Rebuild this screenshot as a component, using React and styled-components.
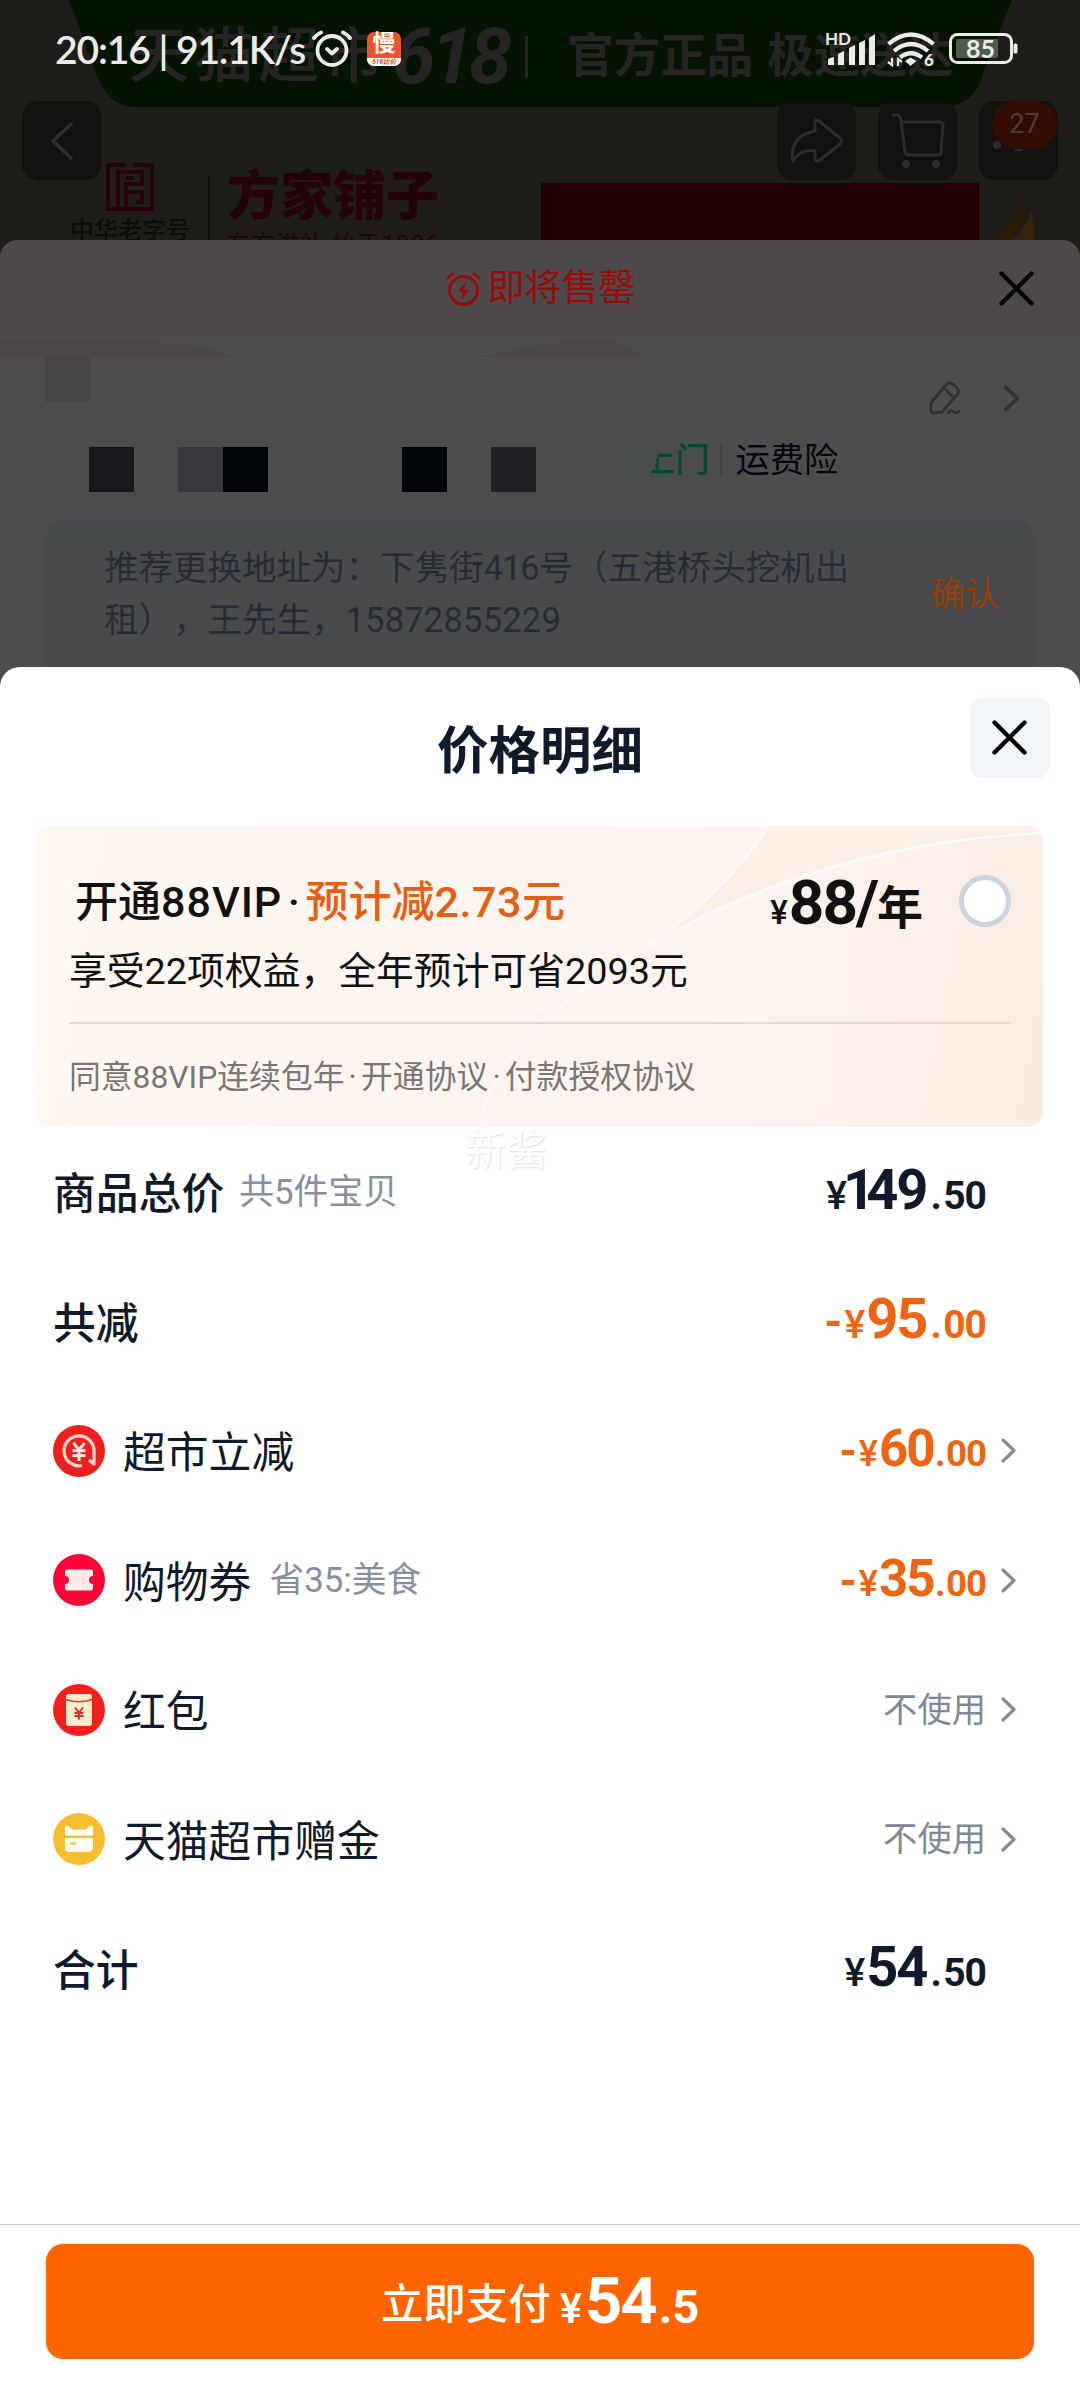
import React from "react";
import styled, { createGlobalStyle } from "styled-components";

const Global = createGlobalStyle`
  * { box-sizing: border-box; }
  body { margin: 0; background: #1e1d1a; }
  svg { display: block; flex: none; }
`;

const Screen = styled.main`
  position: relative;
  width: 1080px;
  height: 2400px;
  overflow: hidden;
  display: flex;
  flex-direction: column;
  background: #1e1d1a;
  font-family: Roboto, "Noto Sans CJK SC", sans-serif;
  white-space: nowrap;
  text-spacing-trim: space-all;
`;

/* ---------- status bar ---------- */

const StatusBar = styled.header`
  position: absolute;
  inset: 0 0 auto 0;
  z-index: 5;
  height: 98px;
  padding: 0 62px 0 55px;
  display: flex;
  align-items: center;
  justify-content: space-between;
  color: #ecebea;
`;

const StatusGroup = styled.div`
  display: flex;
  align-items: center;
  gap: ${(p) => p.$gap}px;
`;

const Clock = styled.span`
  font-family: Lato, sans-serif;
  font-size: 39px;
  font-weight: 600;
  letter-spacing: -1.1px;
  line-height: 44px;
`;

const SlowApp = styled.div`
  width: 34px;
  height: 34px;
  margin-left: 8px;
  border-radius: 7px;
  display: flex;
  flex-direction: column;
  background: #ee5330;
`;

const SlowGlyph = styled.span`
  height: 26px;
  font-size: 23px;
  font-weight: 700;
  line-height: 24px;
  text-align: center;
  color: #fff;
`;

const SlowTag = styled.span`
  height: 8px;
  border-radius: 0 0 7px 7px;
  background: #fff;
  color: #e0452a;
  font-size: 6.5px;
  font-style: italic;
  font-weight: 700;
  line-height: 8px;
  text-align: center;
`;

/* ---------- product page behind the sheets ---------- */

const Hero = styled.section`
  position: relative;
  flex: none;
  height: 258px;
  margin-bottom: -18px;
  overflow: hidden;
  display: flex;
  flex-direction: column;
`;

const Promo = styled.div`
  position: relative;
  flex: none;
  height: 107px;
  display: flex;
  align-items: center;
  padding: 6px 0 0 129px;
  color: #262524;
`;

const PromoShape = styled.svg`
  position: absolute;
  inset: 0;
`;

const PromoText = styled.span`
  position: relative;
  font-size: ${(p) => p.$size}px;
  font-weight: ${(p) => p.$weight || 700};
  line-height: 1;
  letter-spacing: ${(p) => p.$spacing || 0}px;
  font-style: ${(p) => (p.$italic ? "italic" : "normal")};
  margin-left: ${(p) => p.$left || 0}px;
`;

const PromoRule = styled.i`
  position: relative;
  width: 3px;
  height: 42px;
  margin: 0 39px 0 18px;
  background: #262524;
`;

const Brand = styled.div`
  display: flex;
  flex: none;
  padding: 56px 0 0 69px;
`;

const Seal = styled.div`
  width: 122px;
  display: flex;
  flex-direction: column;
  align-items: center;
  gap: 6px;
  color: #0c0b0a;
  font-size: 24px;
  font-weight: 500;
  line-height: 28px;
`;

const BrandRule = styled.i`
  width: 2px;
  height: 90px;
  margin: 12px 17px 0;
  background: #11100e;
`;

const BrandName = styled.div`
  display: flex;
  flex-direction: column;
  width: 314px;
  color: #240306;
  font-size: 53px;
  font-weight: 900;
  line-height: 68px;
`;

const BrandSub = styled.span`
  font-size: 23px;
  font-weight: 400;
  letter-spacing: 1.6px;
  line-height: 24px;
  padding-top: 2px;
`;

const RedPanel = styled.div`
  width: 438px;
  height: 80px;
  margin-top: 20px;
  background: #200002;
`;

const NavLayer = styled.nav`
  position: absolute;
  inset: 101px 22px auto 22px;
  display: flex;
  gap: 22px;
`;

const NavButton = styled.div`
  position: relative;
  width: 79px;
  height: 79px;
  border-radius: 15px;
  background: #11110f;
  display: flex;
  align-items: center;
  justify-content: center;
  margin-right: ${(p) => (p.$push ? "auto" : 0)};
`;

const Badge = styled.span`
  position: absolute;
  top: 0;
  right: 1px;
  width: 65px;
  height: 47px;
  border-radius: 24px;
  background: #340d00;
  color: #4c3d38;
  font-size: 27px;
  line-height: 47px;
  text-align: center;
`;

/* ---------- order sheet ---------- */

const OrderSheet = styled.section`
  position: relative;
  flex: none;
  height: 445px;
  margin-bottom: -18px;
  border-radius: 18px 18px 0 0;
  overflow: hidden;
  background: #4d4d4d;
`;

const SoldOut = styled.div`
  height: 117px;
  display: grid;
  grid-template-columns: 1fr auto 1fr;
  align-items: start;
  padding: 29px 46px 0 47px;
  background: linear-gradient(#4d4a49 0, #4d4a49 90px, #4d4d4d 108px);
  color: #980909;
`;

const SoldOutText = styled.div`
  grid-column: 2;
  display: flex;
  align-items: center;
  gap: 7px;
  font-size: 37px;
  line-height: 40px;
`;

const CloseGlyph = styled.div`
  justify-self: end;
  padding-top: 2px;
`;

const Swash = styled.svg`
  margin-top: -17px;
`;

const Mosaic = styled.div`
  display: flex;
  height: ${(p) => p.$height}px;
  padding-left: ${(p) => p.$left}px;
`;

const Cell = styled.i`
  width: 44.7px;
  height: 44.7px;
  background: ${(p) => p.$tone || "transparent"};
`;

const AddressTools = styled.div`
  flex: 1;
  display: flex;
  justify-content: flex-end;
  align-items: center;
  gap: 42px;
  height: 82px;
  padding-right: 60px;
`;

const Service = styled.div`
  display: flex;
  align-items: center;
  margin: -12px 0 0 87px;
  height: 50px;
  padding-left: 18px;
  font-size: 34.3px;
  line-height: 50px;
  color: #05080f;
  background: linear-gradient(100deg, #4a4d4d 0, #4b4d4d 36px, transparent 70px);
`;

const DoorPickup = styled.span`
  color: #034a34;
  font-weight: 500;
  clip-path: polygon(5px 100%, 18px 18px, 24px 0, 100% 0, 100% 100%);
`;

const ServiceRule = styled.i`
  width: 2px;
  height: 31px;
  margin: 0 13px 0 11px;
  background: #434344;
`;

const AddressTip = styled.div`
  margin: 0 46px;
  height: 160px;
  border-radius: 18px;
  display: flex;
  justify-content: space-between;
  align-items: flex-start;
  padding: 22px 35px 0 58px;
  background: linear-gradient(#474a4c, #494a4b 40px);
  color: #282b34;
  font-size: 34.5px;
  line-height: 52px;
`;

const Confirm = styled.span`
  padding-top: 26px;
  font-size: 34px;
  color: #963f0a;
`;

/* ---------- price sheet ---------- */

const PriceSheet = styled.section`
  position: relative;
  flex: 1;
  display: flex;
  flex-direction: column;
  border-radius: 20px 20px 0 0;
  background: #fff;
  color: #101a2b;
`;

const SheetHead = styled.div`
  height: 159px;
  display: grid;
  grid-template-columns: 1fr auto 1fr;
  align-items: start;
  padding: 31px 30px 0;
`;

const SheetTitle = styled.h1`
  grid-column: 2;
  margin: 24px 0 0;
  font-size: 51.5px;
  font-weight: 700;
  line-height: 60px;
`;

const CloseButton = styled.button`
  justify-self: end;
  width: 80px;
  height: 80px;
  border: 0;
  border-radius: 12px;
  padding: 0 1px 1px 0;
  display: grid;
  place-items: center;
  background: #f1f5f9;
`;

const VipCard = styled.div`
  position: relative;
  height: 301px;
  margin: 0 37px 0 35px;
  border-radius: 15px;
  overflow: hidden;
  background: linear-gradient(100deg, #fef8f1 0%, #fef5f0 30%, #fdf4f0 65%, #f9ece4 100%);
  color: #12110f;
`;

const VipArt = styled.svg`
  position: absolute;
  inset: 0;
`;

const VipBody = styled.div`
  position: relative;
  padding: 44px 32px 0 34px;
`;

const VipTop = styled.div`
  display: flex;
  align-items: center;
  height: 62px;
  padding-left: 6px;
`;

const VipName = styled.div`
  flex: 1;
  padding-top: 2px;
  font-size: 43px;
  font-weight: 500;
  line-height: 62px;
  em { font-style: normal; color: #e85d14; }
`;

const Latin = styled.span`
  letter-spacing: ${(p) => p.$spacing}px;
`;

const Dot = styled.span`
  margin: 0 0.13em;
  &::before { content: "·"; }
`;

const VipPrice = styled.div`
  display: flex;
  align-items: baseline;
  height: 62px;
  padding-top: 2px;
  line-height: 62px;
  font-weight: 700;
  margin-right: 36px;
`;

const Glyph = styled.span`
  font-size: ${(p) => p.$size}px;
  font-weight: ${(p) => p.$weight || 700};
  letter-spacing: ${(p) => p.$spacing || 0}px;
  margin-left: ${(p) => p.$left || 0}px;
`;

const Radio = styled.i`
  width: 52px;
  height: 52px;
  border: 5px solid #cdd3db;
  border-radius: 50%;
  background: #fff;
`;

const VipBenefit = styled.div`
  height: 92px;
  padding-top: 9px;
  border-bottom: 2px solid #e3dbd6;
  font-size: 37.8px;
  line-height: 60px;
`;

const VipTerms = styled.div`
  padding-top: 30px;
  font-size: 31.8px;
  line-height: 46px;
  color: #7a7673;
`;

const Watermark = styled.span`
  position: absolute;
  left: 465px;
  top: 459px;
  font-size: 41px;
  line-height: 50px;
  color: #fff;
  text-shadow: 1px 1px 2px #dcdce2;
`;

const Row = styled.div`
  height: 129.5px;
  display: flex;
  align-items: center;
  padding: 0 64px 0 53px;
`;

const RowIcon = styled.svg`
  width: 52px;
  height: 52px;
  margin-right: 18px;
`;

const Label = styled.span`
  padding-top: 5px;
  font-size: 42.8px;
  line-height: 50px;
  font-weight: ${(p) => (p.$strong ? 500 : 400)};
`;

const Note = styled.span`
  margin-left: ${(p) => p.$left || 15}px;
  font-size: 34.8px;
  line-height: 50px;
  color: #868f9d;
`;

const RowEnd = styled.div`
  margin-left: auto;
  display: flex;
  align-items: center;
  color: ${(p) => p.$color || "inherit"};
`;

const Unused = styled.span`
  font-size: 34.3px;
  line-height: 50px;
`;

const Amount = styled.span`
  display: flex;
  align-items: baseline;
  padding-top: 2px;
  line-height: 60px;
`;

const Arrow = styled.span`
  width: 30px;
  display: flex;
  justify-content: flex-end;
`;

const Footer = styled.footer`
  margin-top: auto;
  height: 176px;
  padding: 19px 46px 0;
  border-top: 1px solid #cbcbcb;
`;

const PayButton = styled.button`
  width: 100%;
  height: 115px;
  border: 0;
  border-radius: 17px;
  display: flex;
  align-items: baseline;
  justify-content: center;
  padding: 0;
  background: #ff6400;
  color: #fff;
  font-family: inherit;
  line-height: 114px;
`;

const PayLabel = styled.span`
  align-self: center;
  padding-top: 6px;
  font-size: 42.5px;
  font-weight: 500;
  line-height: 50px;
`;

const GREY = "#858a94";
const ORANGE = "#ee6410";

const Cross = ({ size = 35 }) => (
  <svg width={size} height={size} viewBox="0 0 35 35" fill="none" stroke="#060606" strokeWidth="4.4" strokeLinecap="round">
    <path d="M2.5 2.5 32.5 32.5M32.5 2.5 2.5 32.5" />
  </svg>
);

const Chevron = ({ color = GREY, w = 15, h = 25 }) => (
  <svg width={w} height={h} viewBox="0 0 15 25" fill="none" stroke={color} strokeWidth="3.2" strokeLinecap="round" strokeLinejoin="round">
    <path d="M2 2 13 12.5 2 23" />
  </svg>
);

function StatusIcons() {
  return (
    <svg width="194" height="42" viewBox="824 29 194 42" fill="none">
      <text x="825" y="46" fontFamily="Lato, sans-serif" fontWeight="700" fontSize="17" fill="#ecebea">HD</text>
      <g fill="#ecebea">
        <path d="M828 66v-5q0-2 6-3v8z" />
        <path d="M838 66V55l6-3v14zM849 66V49l6-3v20zM859 66V44l6-3v25zM869 66V39l6-4v31z" />
        <path d="m905 62 5.500-3.500 6 3.500-6 5z" />
      </g>
      <g stroke="#ecebea" strokeWidth="4.200">
        <path d="M888.500 45Q911 26 933.500 45" />
        <path d="M894 52Q911 38 928 52" />
        <path d="M900 58.500Q911 50 922 58.500" />
      </g>
      <path d="M892 59v7l-4-3M898 67v-7l4 3" stroke="#ecebea" strokeWidth="2.300" />
      <text x="924" y="67" fontFamily="Lato, sans-serif" fontWeight="900" fontSize="17" fill="#ecebea">6</text>
      <rect x="950.500" y="35.500" width="61" height="28" rx="7" stroke="#ecebea" strokeWidth="3" />
      <rect x="956" y="40" width="42" height="19" rx="2" fill="#4c5e49" />
      <rect x="1013.500" y="44.500" width="4" height="10" rx="1.500" fill="#ecebea" />
      <text x="980.500" y="59" textAnchor="middle" fontFamily="Lato, sans-serif" fontWeight="700" fontSize="25" fill="#ecebea">85</text>
    </svg>
  );
}

function Status() {
  return (
    <StatusBar>
      <StatusGroup $gap={7}>
        <Clock>20:16 | 91.1K/s</Clock>
        <svg width="40" height="38" viewBox="0 0 40 38" fill="none" stroke="#ecebea" strokeWidth="3.800" strokeLinecap="round" strokeLinejoin="round">
          <circle cx="20" cy="20.500" r="14.500" />
          <path d="M2 8Q5 4 9 2.500M38 8Q35 4 31 2.500M15 19l5 4.500 5-4.500" />
        </svg>
        <SlowApp>
          <SlowGlyph>慢</SlowGlyph>
          <SlowTag>618比价</SlowTag>
        </SlowApp>
      </StatusGroup>
      <StatusIcons />
    </StatusBar>
  );
}

function ProductHero() {
  return (
    <Hero>
      <Promo>
        <PromoShape width="1080" height="107" viewBox="0 0 1080 107">
          <path d="M69 0H1012L984 70Q976 107 940 107H135Q110 107 98 78Z" fill="#041400" />
        </PromoShape>
        <PromoText $size={60} $spacing={5} $weight={500}>天猫超市</PromoText>
        <PromoText $size={78} $italic $spacing={-5} $left={3}>618</PromoText>
        <PromoRule />
        <PromoText $size={46.5}>官方正品</PromoText>
        <PromoText $size={46.5} $left={14}>极速送达</PromoText>
      </Promo>
      <Brand>
        <Seal>
          <svg width="48" height="48" viewBox="0 0 48 48" fill="none" stroke="#240306" strokeWidth="4">
            <path d="M20 2H2V46H46V2H28M12 46V9H36V21H20V29H36V39H30M20 15H28M20 29V46" />
          </svg>
          中华老字号
        </Seal>
        <BrandRule />
        <BrandName>
          方家铺子
          <BrandSub>东方滋补 始于1906</BrandSub>
        </BrandName>
        <RedPanel />
        <svg width="60" height="80" viewBox="979 163 60 80">
          <path d="M989 240Q1020 225 1023 190Q1029 215 1010 240Z" fill="#2d1d05" />
          <path d="M1011 240Q1028 228 1031 210Q1036 225 1034 240Z" fill="#35230a" />
        </svg>
      </Brand>
      <NavLayer>
        <NavButton $push>
          <svg width="24" height="40" viewBox="0 0 24 40" fill="none" stroke="#302f2e" strokeWidth="3.500" strokeLinecap="round" strokeLinejoin="round">
            <path d="M21 3 3 20 21 37" />
          </svg>
        </NavButton>
        <NavButton>
          <svg width="54" height="46" viewBox="0 0 54 46" fill="none" stroke="#2e2d2c" strokeWidth="3" strokeLinejoin="round">
            <path d="M25 3Q26 1 29 3L50 20Q53 23 50 26L30 42Q25 45 25 40V33Q11 30 3 43Q-1 18 25 13Z" />
          </svg>
        </NavButton>
        <NavButton>
          <svg width="54" height="56" viewBox="0 0 54 56" fill="none" stroke="#2e2d2c" strokeWidth="3" strokeLinejoin="round" strokeLinecap="round">
            <path d="M2 2H6Q9 2 10 7L14 39Q15 42 18 42H47Q50 42 50 39L52 12Q52 9 49 9H10" />
            <circle cx="15" cy="51" r="4" fill="#2e2d2c" stroke="none" />
            <circle cx="45" cy="51" r="4" fill="#2e2d2c" stroke="none" />
          </svg>
        </NavButton>
        <NavButton>
          <svg width="54" height="20" viewBox="0 0 54 20" fill="#2e2d2c">
            <circle cx="5" cy="14" r="4" />
            <path d="M23 18h8v2h-8z" />
          </svg>
          <Badge>27</Badge>
        </NavButton>
      </NavLayer>
    </Hero>
  );
}

function Order() {
  return (
    <OrderSheet>
      <SoldOut>
        <SoldOutText>
          <svg width="35" height="36" viewBox="0 0 35 36" fill="none" stroke="#980909" strokeWidth="3" strokeLinecap="round">
            <circle cx="17.500" cy="19.500" r="14" />
            <path d="M2 7Q4 4 7 3M33 7Q31 4 28 3" />
            <path d="M19.500 11 12 20.500h5l-1.500 8.500 8-10.500h-5.500z" fill="#980909" stroke="none" />
          </svg>
          即将售罄
        </SoldOutText>
        <CloseGlyph><Cross /></CloseGlyph>
      </SoldOut>
      <Swash width="1080" height="17" viewBox="0 0 1080 17">
        <path d="M0 0H140Q190 3 238 17H0Z" fill="#4d4747" />
        <path d="M480 17Q560 -2 605 0Q628 4 645 17Z" fill="#4d4848" />
      </Swash>
      <Mosaic $height={90} $left={45}>
        <Cell $tone="#464649" />
        <AddressTools>
          <svg width="32" height="34" viewBox="0 0 32 34" fill="none" stroke="#2e3036" strokeWidth="2.800" strokeLinecap="round" strokeLinejoin="round">
            <path d="M2 22 17 4Q21 0 25 4L28 7Q31 11 28 14L13 31 3 32Q1 30 2 22ZM16 8 25 17M19 32Q22 28 25 31Q28 33 30 30" />
          </svg>
          <Chevron color="#2e3036" w={17} h={27} />
        </AddressTools>
      </Mosaic>
      <Mosaic $height={73} $left={89}>
        <Cell $tone="#16181c" />
        <Cell $tone="#4c4c4c" />
        <Cell $tone="#37373d" />
        <Cell $tone="#02060b" />
        <Cell />
        <Cell $tone="#4e4e4e" />
        <Cell />
        <Cell $tone="#02060b" />
        <Cell />
        <Cell $tone="#202226" />
        <Service>
          <DoorPickup>上门</DoorPickup>
          <ServiceRule />
          运费险
        </Service>
      </Mosaic>
      <AddressTip>
        <span>
          推荐更换地址为：下隽街<Latin $spacing={-1}>416</Latin>号（五港桥头挖机出
          <br />
          租），王先生，<Latin $spacing={0.2}>15872855229</Latin>
        </span>
        <Confirm>确认</Confirm>
      </AddressTip>
    </OrderSheet>
  );
}

/* A leading 1 is set tighter than the other figures. */
const Money = ({ minus, whole, cents, small }) => {
  const size = small ? 51 : 56;
  const one = whole[0] === "1";
  return (
    <Amount>
      {minus && <Glyph $size={small ? 44 : 46} $weight={700}>-</Glyph>}
      <Glyph $size={small ? 36 : 39} $weight={500} $left={minus ? 2 : 0}>¥</Glyph>
      {one && <Glyph $size={size} $spacing={-9} $left={-4}>1</Glyph>}
      <Glyph $size={size} $spacing={-2} $left={one ? 0 : 1}>{one ? whole.slice(1) : whole}</Glyph>
      <Glyph $size={small ? 36.5 : 39} $left={small ? 1.5 : 4} $spacing={small ? -0.5 : 0.5}>.</Glyph>
      <Glyph $size={small ? 36.5 : 39} $spacing={-1} $left={1}>{cents}</Glyph>
    </Amount>
  );
};

const icons = {
  instant: (
    <RowIcon viewBox="0 0 52 52">
      <circle cx="26" cy="26" r="26" fill="#f01e1c" />
      <path d="M29 40.500A15 15 0 1 1 41 27V39L36 35" fill="none" stroke="#ffd9cf" strokeWidth="3.200" strokeLinejoin="round" />
      <path d="M20.500 18 26 25 31.500 18M19.500 25.500H32.500M19.500 30.500H32.500M26 25V36" fill="none" stroke="#ffe6df" strokeWidth="3" />
    </RowIcon>
  ),
  coupon: (
    <RowIcon viewBox="0 0 52 52">
      <circle cx="26" cy="26" r="26" fill="#fb0637" />
      <path d="M14 15.500H38Q40 15.500 40 18V22A4 4 0 0 0 40 30V34Q40 36.500 38 36.500H14Q12 36.500 12 34V30A4 4 0 0 0 12 22V18Q12 15.500 14 15.500Z" fill="#fdebe9" />
      <path d="M30.500 19V34" stroke="#f7c3c3" strokeWidth="1.500" strokeDasharray="2 2.500" />
    </RowIcon>
  ),
  packet: (
    <RowIcon viewBox="0 0 52 52">
      <circle cx="26" cy="26" r="26" fill="#f4201c" />
      <rect x="13" y="10" width="26" height="32" rx="3" fill="#fdeccb" />
      <path d="M13 15.500Q26 20 39 15.500" fill="none" stroke="#c24a30" strokeWidth="1.400" />
      <path d="M22 23.500 26 28.500 30 23.500M21.500 29H30.500M21.500 32H30.500M26 28.500V35.500" fill="none" stroke="#d22d1e" strokeWidth="1.900" />
    </RowIcon>
  ),
  gift: (
    <RowIcon viewBox="0 0 52 52">
      <circle cx="26" cy="26" r="26" fill="#f7be32" />
      <path d="M12 15Q12 11.500 15 13L19 16.500H33L37 13Q40 11.500 40 15V22.500H12ZM12 25H40V34Q40 39 35 39H17Q12 39 12 34Z" fill="#fffdf5" />
      <path d="M17 30.500H23" stroke="#f7be32" strokeWidth="2.200" />
    </RowIcon>
  ),
};

function Prices() {
  return (
    <PriceSheet>
      <SheetHead>
        <SheetTitle>价格明细</SheetTitle>
        <CloseButton aria-label="关闭"><Cross /></CloseButton>
      </SheetHead>
      <VipCard>
        <VipArt width="1008" height="301" viewBox="35 826 1008 301" fill="none">
          <path d="M768 826H1043V833C900 838 800 870 700 915L650 945Q720 895 768 826Z" fill="#fbefe5" />
          <path d="M768 826C725 895 640 965 520 1018" stroke="#fffaf7" strokeWidth="2" />
          <path d="M1043 833C860 842 690 900 545 1018Q490 1070 480 1127" stroke="#fff9f6" strokeWidth="2.500" />
        </VipArt>
        <VipBody>
          <VipTop>
            <VipName>
              开通<Latin $spacing={1}>88VIP</Latin><Dot />
              <em>预计减<Latin $spacing={0.5}>2.73</Latin>元</em>
            </VipName>
            <VipPrice>
              <Glyph $size={33} $weight={500}>¥</Glyph>
              <Glyph $size={62} $spacing={-2} $left={1}>88/</Glyph>
              <Glyph $size={46}>年</Glyph>
            </VipPrice>
            <Radio />
          </VipTop>
          <VipBenefit>享受22项权益，全年预计可省2093元</VipBenefit>
          <VipTerms>同意88VIP连续包年<Dot />开通协议<Dot />付款授权协议</VipTerms>
        </VipBody>
      </VipCard>
      <Watermark>新酱</Watermark>
      <Row>
        <Label $strong>商品总价</Label>
        <Note>共5件宝贝</Note>
        <RowEnd>
          <Money whole="149" cents="50" />
          <Arrow />
        </RowEnd>
      </Row>
      <Row>
        <Label $strong>共减</Label>
        <RowEnd $color={ORANGE}>
          <Money minus whole="95" cents="00" />
          <Arrow />
        </RowEnd>
      </Row>
      <Row>
        {icons.instant}
        <Label>超市立减</Label>
        <RowEnd $color={ORANGE}>
          <Money minus small whole="60" cents="00" />
          <Arrow><Chevron /></Arrow>
        </RowEnd>
      </Row>
      <Row>
        {icons.coupon}
        <Label>购物券</Label>
        <Note $left={18}>省35:美食</Note>
        <RowEnd $color={ORANGE}>
          <Money minus small whole="35" cents="00" />
          <Arrow><Chevron /></Arrow>
        </RowEnd>
      </Row>
      <Row>
        {icons.packet}
        <Label>红包</Label>
        <RowEnd $color="#7f8896">
          <Unused>不使用</Unused>
          <Arrow><Chevron /></Arrow>
        </RowEnd>
      </Row>
      <Row>
        {icons.gift}
        <Label>天猫超市赠金</Label>
        <RowEnd $color="#7f8896">
          <Unused>不使用</Unused>
          <Arrow><Chevron /></Arrow>
        </RowEnd>
      </Row>
      <Row>
        <Label $strong>合计</Label>
        <RowEnd>
          <Money whole="54" cents="50" />
          <Arrow />
        </RowEnd>
      </Row>
      <Footer>
        <PayButton>
          <PayLabel>立即支付</PayLabel>
          <Glyph $size={42} $weight={500} $left={9}>¥</Glyph>
          <Glyph $size={65} $spacing={-2} $left={3}>54</Glyph>
          <Glyph $size={47} $spacing={0} $left={3}>.5</Glyph>
        </PayButton>
      </Footer>
    </PriceSheet>
  );
}

export default function App() {
  return (
    <>
      <Global />
      <Screen>
        <Status />
        <ProductHero />
        <Order />
        <Prices />
      </Screen>
    </>
  );
}
